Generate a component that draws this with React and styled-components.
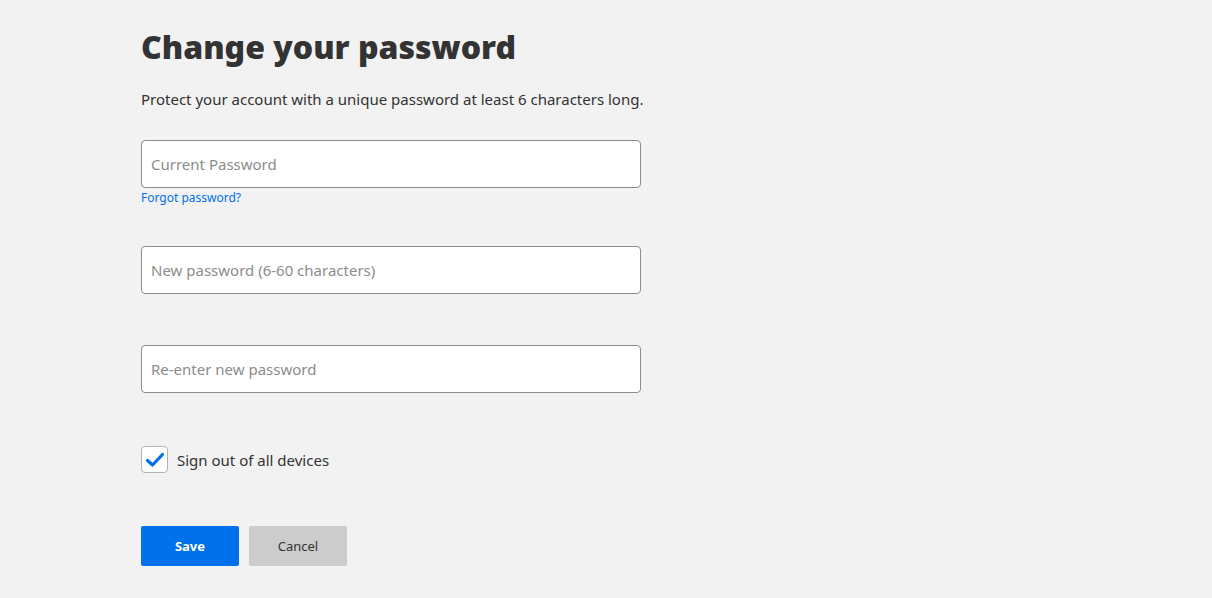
import React, { useState } from 'react';
import styled, { createGlobalStyle } from 'styled-components';

const GlobalStyle = createGlobalStyle`
  html, body {
    margin: 0;
    padding: 0;
    background: #f2f2f2;
  }
  body {
    font-family: 'Noto Sans', 'Open Sans', sans-serif;
    color: #333;
  }
`;

const App = () => {
  const [signOut, setSignOut] = useState(true);

  return (
    <>
      <GlobalStyle />
      <StPage>
        <StForm onSubmit={(e) => e.preventDefault()}>
          <StTitle>Change your password</StTitle>
          <StLead>Protect your account with a unique password at least 6 characters long.</StLead>

          <StField>
            <StInput type="password" placeholder="Current Password" />
            <StLink href="#">Forgot password?</StLink>
          </StField>

          <StField $gap={40}>
            <StInput type="password" placeholder="New password (6-60 characters)" />
          </StField>

          <StField $gap={51}>
            <StInput type="password" placeholder="Re-enter new password" />
          </StField>

          <StCheckRow onClick={() => setSignOut(!signOut)}>
            <StCheckBox>
              {signOut && (
                <svg width="20" height="16" viewBox="0 0 20 16">
                  <path
                    d="M2.5 8.5 L7.5 13 L17.5 2.5"
                    fill="none"
                    stroke="#0071eb"
                    strokeWidth="3.2"
                    strokeLinecap="round"
                    strokeLinejoin="round"
                  />
                </svg>
              )}
            </StCheckBox>
            <StCheckLabel>Sign out of all devices</StCheckLabel>
          </StCheckRow>

          <StButtons>
            <StButton type="submit" $primary>Save</StButton>
            <StButton type="button">Cancel</StButton>
          </StButtons>
        </StForm>
      </StPage>
    </>
  );
};

const StPage = styled.div`
  min-height: 598px;
  padding-left: 141px;
  box-sizing: border-box;
`;

const StForm = styled.form`
  width: 500px;
  padding-top: 26px;
  display: flex;
  flex-direction: column;
`;

const StTitle = styled.h1`
  margin: 0;
  font-size: 32px;
  line-height: 42px;
  font-weight: 900;
  color: #333;
`;

const StLead = styled.p`
  margin: 20px 0 0;
  font-size: 15px;
  line-height: 22px;
  color: #333;
  white-space: nowrap;
`;

const StField = styled.div`
  margin-top: ${({ $gap }) => $gap ?? 30}px;
  display: flex;
  flex-direction: column;
  align-items: flex-start;
`;

const StInput = styled.input`
  width: 500px;
  height: 48px;
  box-sizing: border-box;
  padding: 0 9px;
  border: 1px solid #8c8c8c;
  border-radius: 4px;
  background: #fff;
  font-family: inherit;
  font-size: 15px;
  color: #333;
  outline: none;
  &::placeholder {
    color: #8c8c8c;
  }
`;

const StLink = styled.a`
  margin-top: 2px;
  font-size: 12px;
  line-height: 16px;
  color: #0071eb;
  text-decoration: none;
`;

const StCheckRow = styled.label`
  margin-top: 53px;
  display: flex;
  align-items: center;
  gap: 9px;
  cursor: pointer;
`;

const StCheckBox = styled.span`
  width: 27px;
  height: 27px;
  box-sizing: border-box;
  border: 1px solid #b3b3b3;
  border-radius: 4px;
  background: #fff;
  display: flex;
  align-items: center;
  justify-content: center;
`;

const StCheckLabel = styled.span`
  font-size: 15px;
  color: #333;
`;

const StButtons = styled.div`
  margin-top: 53px;
  display: flex;
  gap: 10px;
`;

const StButton = styled.button`
  width: 98px;
  height: 40px;
  border: none;
  border-radius: 2px;
  font-family: inherit;
  font-size: 13px;
  font-weight: ${({ $primary }) => ($primary ? 700 : 400)};
  color: ${({ $primary }) => ($primary ? '#fff' : '#333')};
  background: ${({ $primary }) => ($primary ? '#0071eb' : '#cccccc')};
  cursor: pointer;
`;

export default App;
